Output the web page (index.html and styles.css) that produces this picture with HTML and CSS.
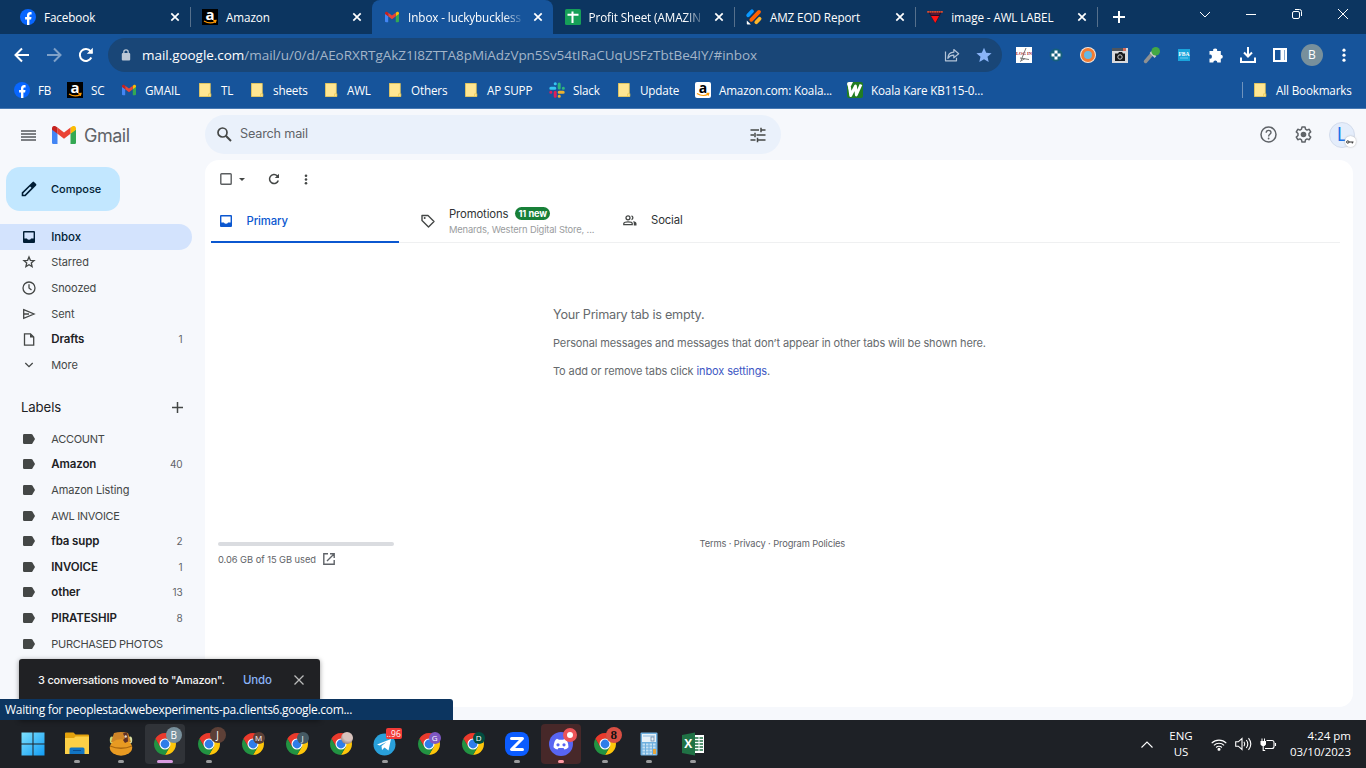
FILE: index.html
```html
<!DOCTYPE html>
<html lang="en">
<head>
    <meta charset="UTF-8">
    <meta name="viewport" content="width=device-width, initial-scale=1.0">
    <title>Inbox - Gmail</title>
    <link rel="stylesheet" href="styles.css">
</head>
<body>
    <!-- shared icons -->
    <svg class="defs" width="0" height="0">
        <symbol id="close" viewBox="0 0 10 10"><path d="M1.3 1.3l7.4 7.4M8.7 1.3L1.3 8.7" stroke="currentColor" stroke-width="1.7"/></symbol>
        <symbol id="facebook" viewBox="0 0 16 16"><circle cx="8" cy="8" r="8" fill="#0866ff"/><path d="M7 16V10.400H5.100V7.900H7V6.600C7 4.200 8.200 3 10.300 3c.5 0 1 .1 1.300.2v2.200h-.9c-1 0-1.300.5-1.300 1.300v1.200h2.100l-.4 2.500H9.400V16z" fill="#fff"/></symbol>
        <symbol id="gmail" viewBox="0 0 24 18"><path d="M0 3v13.400C0 17.300.7 18 1.600 18h3.900V7.200z" fill="#4285f4"/><path d="M18.500 18h3.900c.9 0 1.600-.7 1.600-1.600V3l-5.500 4.200z" fill="#34a853"/><path d="M18.500 1.500v6.300L24 3.700V2.400c0-2-2.300-3.200-3.900-2z" fill="#fbbc04"/><path d="M5.500 7.800V1.500l6.500 5 6.500-5v6.300L12 12.700z" fill="#ea4335"/><path d="M0 2.400v1.300l5.500 4.100V1.500L3.900.4C2.300-.8 0 .4 0 2.400z" fill="#c5221f"/></symbol>
        <symbol id="folder" viewBox="0 0 16 16"><path d="M2.300 1.300h11v10.500h.6v2.900H2.300z" fill="#ffe692"/><path d="M2.500 1.500h10.800v10.300M13.600 11.800h-2v2.800M2.500 1.300v13.200h11.400v-3" stroke="#eac54f" stroke-width=".7" fill="none"/></symbol>
        <symbol id="inbox" viewBox="0 0 12 12"><path fill-rule="evenodd" d="M1.300 0h9.400C11.500 0 12 .5 12 1.300v9.400c0 .8-.5 1.300-1.300 1.300H1.300C.5 12 0 11.500 0 10.700V1.300C0 .5.500 0 1.300 0zM1.400 1.400v6h2.500a2.300 2.300 0 0 0 4.200 0h2.500v-6z" fill="currentColor"/></symbol>
        <symbol id="label" viewBox="0 0 12 10"><path d="M1.200 0h7q.8 0 1.200.6L12 5 9.400 9.400q-.4.6-1.200.6h-7Q0 10 0 8.800V1.200Q0 0 1.200 0z" fill="#444746"/></symbol>
        <symbol id="chrome" viewBox="0 0 48 48"><path d="M24 13h19.050A22 22 0 0 1 24 46l9.530-16.500z" fill="#fdc60a"/><path d="M33.530 29.500L24 46A22 22 0 0 1 4.950 13l9.520 16.500z" fill="#229342"/><path d="M14.470 29.500L4.950 13a22 22 0 0 1 38.100 0H24z" fill="#ea3a2c"/><circle cx="24" cy="24" r="11" fill="#fff"/><circle cx="24" cy="24" r="8.800" fill="#2f7de9"/></symbol>
    </svg>

    <div class="tabs">
        <div class="tab">
            <svg class="fav"><use href="#facebook"/></svg><span>Facebook</span>
            <svg class="x"><use href="#close"/></svg>
        </div>
        <div class="tab line">
            <svg class="fav" viewBox="0 0 16 16"><rect width="16" height="16"/><text x="8" y="10.800" font-family="Open Sans" font-size="15" font-weight="700" text-anchor="middle" fill="#fff">a</text><path d="M2 12q6 3.600 11.500.5M11.300 11.700l2.700-.2-.7 2.300" stroke="#f90" stroke-width="1.200" fill="none"/></svg><span>Amazon</span>
            <svg class="x"><use href="#close"/></svg>
        </div>
        <div class="tab active">
            <svg class="fav gm"><use href="#gmail"/></svg><span class="fade">Inbox - luckybuckless</span>
            <svg class="x"><use href="#close"/></svg>
        </div>
        <div class="tab">
            <svg class="fav" viewBox="0 0 16 16"><rect width="16" height="16" rx="1.500" fill="#169f58"/><path d="M2.500 5.700h11M7.500 2.500v11.500" stroke="#fff" stroke-width="2"/></svg><span class="fade">Profit Sheet (AMAZIN</span>
            <svg class="x"><use href="#close"/></svg>
        </div>
        <div class="tab line">
            <svg class="fav" viewBox="0 0 16 16" stroke-linecap="round" stroke-width="3.800"><path d="M2.200 6.300L6 2.300" stroke="#0a99ff"/><path d="M5.300 10.800l7.700-7.900" stroke="#ff6100"/><path d="M10.300 13.200l3.300-3.400" stroke="#ffb629"/><path d="M.8 11.400v3.300q0 .8.800.8h3.300z" fill="#fff" stroke="none"/></svg><span>AMZ EOD Report</span>
            <svg class="x"><use href="#close"/></svg>
        </div>
        <div class="tab line">
            <svg class="fav" viewBox="0 0 16 16"><path d="M1 2.500h14L8.500 14.500z" fill="#2b0b21"/><path d="M.2 2.800h15.600" stroke="#d94a30" stroke-width="1.800" stroke-dasharray="2 .3"/><path d="M3.500 5h9" stroke="#7a2a55"/><path d="M4 7h8L8.300 14z" fill="#ff1515"/></svg><span>image - AWL LABEL</span>
            <svg class="x"><use href="#close"/></svg>
        </div>
        <div class="new-tab line"><svg width="12" height="12"><path d="M6 0v12M0 6h12" stroke="#fff" stroke-width="2"/></svg></div>
        <div class="win">
            <svg viewBox="0 0 12 12"><path d="M1 4l5 5 5-5"/></svg>
            <svg viewBox="0 0 12 12"><path d="M1 6.500h10"/></svg>
            <svg viewBox="0 0 12 12"><rect x="1.500" y="3.500" width="7" height="7" rx="1.500"/><path d="M4 1.500h4.500a2 2 0 0 1 2 2V8"/></svg>
            <svg viewBox="0 0 12 12"><path d="M1 1l10 10M11 1L1 11"/></svg>
        </div>
    </div>

    <div class="toolbar">
        <div class="nav">
            <svg viewBox="0 0 16 16"><path d="M15 8H2M8 1.500L1.500 8 8 14.500"/></svg>
            <svg viewBox="0 0 16 16" class="dim"><path d="M1 8h13M8 1.500L14.500 8 8 14.500"/></svg>
            <svg viewBox="0 0 16 16"><path d="M13.300 10.500A6 6 0 1 1 12.600 4.200L14 5.800"/><path d="M14.800.8v6H8.800z" fill="#fff" stroke="none"/></svg>
        </div>
        <div class="address">
            <svg class="lock" width="10" height="12" viewBox="0 0 10 12"><rect x=".8" y="4" width="8.400" height="7.500" rx="1" fill="#bdc8d6"/><path d="M2.800 4.500V3a2.200 2.200 0 0 1 4.400 0v1.500" stroke="#bdc8d6" stroke-width="1.300" fill="none"/></svg>
            <p class="url"><b>mail.google.com</b>/mail/u/0/d/AEoRXRTgAkZ1I8ZTTA8pMiAdzVpn5Sv54tIRaCUqUSFzTbtBe4IY/#inbox</p>
            <svg class="share" width="16" height="16" viewBox="0 0 16 16"><path d="M1.500 4.500v9.300h11v-3M3.800 11.300c.2-4 2.500-6 6-6.100V2.500l4.900 4.200-4.900 4.100V8.200c-2.600 0-4.500.8-6 3.100z" fill="none" stroke="#b3c4d8" stroke-width="1.200" stroke-linejoin="round"/></svg>
            <svg width="16" height="16" viewBox="0 0 16 16"><path d="M8 .7l2.200 5 5.400.5-4.100 3.500 1.200 5.300L8 12.200 3.300 15l1.200-5.300L.4 6.200l5.400-.5z" fill="#8ab4f8"/></svg>
        </div>
        <div class="exts">
            <svg viewBox="0 0 16 16"><rect width="16" height="16" fill="#fff"/><path d="M10 1L5 13.500M4 11l9 1.500M4 14.500l5-3" stroke="#777" fill="none"/><text x="8" y="7.800" font-family="Liberation Serif" font-size="4.500" font-weight="700" text-anchor="middle" fill="#a02030">LOG IN</text></svg>
            <svg viewBox="0 0 16 16"><circle cx="8" cy="8" r="6.500" fill="#17607c"/><path d="M8 3.500v9M3.500 8h9" stroke="#fff" stroke-width="3"/><path d="M6.500 6.500h3v3h-3z" fill="#175d7c"/></svg>
            <svg viewBox="0 0 16 16"><circle cx="8" cy="8" r="8" fill="#f4e7dc"/><circle cx="8" cy="8" r="5.500" fill="#65b8e4" stroke="#f17c34" stroke-width="3"/></svg>
            <svg viewBox="0 0 16 16"><rect width="16" height="15" y="1" fill="#d9dadd"/><path d="M0 1h12v3H0z" fill="#4e555e"/><path d="M11 1h3v3h-3z" fill="#d46b5a"/><path d="M3 6.500h3l1-1.500h3l1 1.500h2V14H3z" fill="#17191c"/><circle cx="8" cy="10" r="2.200" fill="#17191c" stroke="#ccc"/></svg>
            <svg viewBox="0 0 16 16"><path d="M1.500 14.500L8 7" stroke="#8f9192" stroke-width="3.500" stroke-linecap="round"/><path d="M6.500 5l5 5" stroke="#c8cac8" stroke-width="2.500"/><circle cx="11.700" cy="4.300" r="4.300" fill="#43a844"/></svg>
            <svg viewBox="0 0 16 16"><rect x="2" y="2" width="12" height="12" fill="#1aa5dc"/><text x="8" y="8.500" font-family="Liberation Serif" font-size="5.500" font-weight="700" text-anchor="middle" fill="#fff">FBA</text><path d="M4 11h8" stroke="#70c9ec"/></svg>
            <svg viewBox="0 0 16 16"><path d="M1.500 4h3.700a2 2 0 1 1 3.900 0h3.700v3.800a2 2 0 1 1 0 4v3.700H9.300a2 2 0 1 0-4 0H1.500v-3.900a2 2 0 1 0 0-3.900z" fill="#fff"/></svg>
            <svg viewBox="0 0 16 16"><path d="M8 0v9M4 5.500l4 4 4-4M1 10.500V15h14v-4.500" stroke="#fff" stroke-width="2" fill="none"/></svg>
            <svg viewBox="0 0 16 16"><path d="M2 2h12v12H2zM9.500 2v12M11.500 2v12" stroke="#fff" stroke-width="2" fill="none"/></svg>
            <span class="me">B</span>
            <svg viewBox="0 0 16 16" fill="#fff"><circle cx="8" cy="3.200" r="1.600"/><circle cx="8" cy="8.200" r="1.600"/><circle cx="8" cy="13.200" r="1.600"/></svg>
        </div>
    </div>

    <div class="bookmarks">
        <div><svg><use href="#facebook"/></svg>FB</div>
        <div><svg viewBox="0 0 16 16"><rect width="16" height="16"/><text x="8" y="10.800" font-family="Open Sans" font-size="15" font-weight="700" text-anchor="middle" fill="#fff">a</text><path d="M2 12q6 3.600 11.500.5M11.300 11.700l2.700-.2-.7 2.300" stroke="#f90" stroke-width="1.200" fill="none"/></svg>SC</div>
        <div><svg class="gm"><use href="#gmail"/></svg>GMAIL</div>
        <div><svg><use href="#folder"/></svg>TL</div>
        <div><svg><use href="#folder"/></svg>sheets</div>
        <div><svg><use href="#folder"/></svg>AWL</div>
        <div><svg><use href="#folder"/></svg>Others</div>
        <div><svg><use href="#folder"/></svg>AP SUPP</div>
        <div><svg viewBox="0 0 16 16" stroke-width="3" stroke-linecap="round"><path d="M1.800 6.200h4M6.200 1.700h.1" stroke="#36c5f0"/><path d="M10.200 2v4M14.300 6.200h.1" stroke="#2eb67d"/><path d="M10.200 10.300h4M10.200 14.300h.1" stroke="#ecb22e"/><path d="M6.200 10.300v4M1.800 10.300h.1" stroke="#e01e5a"/></svg>Slack</div>
        <div><svg><use href="#folder"/></svg>Update</div>
        <div><svg viewBox="0 0 16 16"><rect width="16" height="16" rx="2" fill="#fff"/><text x="8" y="10.500" font-family="Open Sans" font-size="14" font-weight="700" text-anchor="middle">a</text><path d="M2 11.500q6 3.700 11.500.5M11.500 11.300h2.300l-.6 2.300" stroke="#f90" stroke-width="1.200" fill="none"/></svg>Amazon.com: Koala...</div>
        <div><svg viewBox="0 0 16 16"><rect width="16" height="16" rx="2" fill="#217c22"/><path d="M0 2q0-2 2-2h4L2 8z" fill="#fff"/><path d="M2.500 5l1.200 8.500L8.500 4l.8 9L14 2.500" stroke="#fff" stroke-width="2.800" stroke-linejoin="round" fill="none"/></svg>Koala Kare KB115-0...</div>
        <div class="all"><svg><use href="#folder"/></svg>All Bookmarks</div>
    </div>

    <div class="gmail">
        <div class="sidebar">
            <div class="brand">
                <svg width="15" height="11"><path d="M0 1h15M0 4h15M0 7h15M0 10h15" stroke="#55585c" stroke-width="1.300"/></svg>
                <svg class="logo" width="24" height="18"><use href="#gmail"/></svg>
                <span>Gmail</span>
            </div>
            <button class="compose">
                <svg width="16" height="16" viewBox="0 0 16 16"><path fill-rule="evenodd" d="M.7 15.300V11.500L11.600.9q.7-.6 1.400 0l2.100 2.100q.6.700 0 1.400L4.500 15.300zM2.300 13.700h1.400l6.800-6.900-1.400-1.400-6.800 6.900z" fill="#001d35"/></svg>
                Compose
            </button>
            <ul class="folders">
                <li class="current"><svg viewBox="0 0 12 12"><use href="#inbox"/></svg>Inbox</li>
                <li><svg viewBox="0 0 12 12"><path d="M6 .9l1.400 3.400 3.700.3-2.800 2.400.8 3.600L6 8.700l-3.100 1.900.8-3.600L.9 4.600l3.700-.3z"/></svg>Starred</li>
                <li><svg class="clock" viewBox="0 0 14 14"><circle cx="7" cy="7" r="6"/><path d="M7 3.300V7l2.500 2"/></svg>Snoozed</li>
                <li><svg viewBox="0 0 12 12"><path d="M.7 1.700L11 6 .7 10.300zM1 6h5"/></svg>Sent</li>
                <li class="unread"><svg class="doc" viewBox="0 0 11 13"><path d="M1 .8h6l3.200 3.200v8.200H1z"/><path d="M6.500.5v4h4z" fill="#444746" stroke="none"/></svg>Drafts<i>1</i></li>
                <li><svg viewBox="0 0 12 12"><path d="M2.300 4L6 7.700 9.700 4"/></svg>More</li>
            </ul>
            <div class="labels-title">Labels <svg width="11" height="11"><path d="M5.500 0v11M0 5.500h11" stroke="#444746" stroke-width="1.500"/></svg></div>
            <ul class="labels">
                <li class="caps"><svg><use href="#label"/></svg>ACCOUNT</li>
                <li class="unread"><svg><use href="#label"/></svg>Amazon<i>40</i></li>
                <li><svg><use href="#label"/></svg>Amazon Listing</li>
                <li class="caps"><svg><use href="#label"/></svg>AWL INVOICE</li>
                <li class="unread"><svg><use href="#label"/></svg>fba supp<i>2</i></li>
                <li class="unread"><svg><use href="#label"/></svg>INVOICE<i>1</i></li>
                <li class="unread"><svg><use href="#label"/></svg>other<i>13</i></li>
                <li class="unread"><svg><use href="#label"/></svg>PIRATESHIP<i>8</i></li>
                <li class="caps"><svg><use href="#label"/></svg>PURCHASED PHOTOS</li>
            </ul>
        </div>

        <div class="content">
            <div class="header">
                <div class="search">
                    <svg width="15" height="15" viewBox="0 0 15 15"><circle cx="5.500" cy="5.500" r="4.500" fill="none" stroke="#444746" stroke-width="1.700"/><path d="M8.800 8.800l5.200 5.200" stroke="#444746" stroke-width="2"/></svg>
                    <span>Search mail</span>
                    <svg width="16" height="16" viewBox="0 0 16 16"><path d="M.5 3h8.500M11 3h4.500M11 .7v4.600M.5 8h3.500M5 5.700v4.600M6.500 8h9M.5 13h5M7.500 13h8M7.500 10.700v4.600" stroke="#444746" stroke-width="1.500"/></svg>
                </div>
                <div class="account">
                    <svg width="17" height="17" viewBox="0 0 17 17"><circle cx="8.500" cy="8.500" r="7.500" fill="none" stroke="#5f6368" stroke-width="1.500"/><path d="M6.200 6.800c0-3.200 4.800-3.100 4.800-.3 0 1.800-2.400 1.900-2.400 4" fill="none" stroke="#5f6368" stroke-width="1.400"/><circle cx="8.600" cy="12.500" r=".9" fill="#5f6368"/></svg>
                    <svg width="17" height="17" viewBox="0 0 17 17"><path d="M7 .9h3l.5 2.300 1.500.9 2.200-.8 1.500 2.600-1.700 1.600v2l1.700 1.600-1.500 2.600-2.200-.8-1.500.9L10 16.100H7l-.5-2.300-1.500-.9-2.200.8-1.500-2.600L3 9.500v-2L1.300 5.900l1.500-2.600 2.200.8 1.500-.9z" fill="none" stroke="#5f6368" stroke-width="1.500" stroke-linejoin="round"/><circle cx="8.500" cy="8.500" r="2.800" fill="#5f6368"/></svg>
                    <div class="avatar">L<em><svg width="8" height="4" viewBox="0 0 8 4"><circle cx="1.800" cy="2" r="1.200" fill="none" stroke="#333"/><path d="M3 2h4.500M6.300 2v1.500" stroke="#333"/></svg></em></div>
                </div>
            </div>
            <div class="panel">
                <div class="actions">
                    <svg width="12" height="12"><rect x=".8" y=".8" width="10.400" height="10.400" rx=".8" fill="none" stroke="#5b5e60" stroke-width="1.400"/></svg>
                    <svg class="arrow" width="6" height="3"><path d="M0 0h6L3 3z" fill="#444746"/></svg>
                    <svg class="refresh" width="12" height="12" viewBox="0 0 12 12"><path d="M10.300 7.500A4.500 4.500 0 1 1 9.200 2.800L10.500 4" fill="none" stroke="#444746" stroke-width="1.500"/><path d="M11 .8v4.200H6.800z" fill="#444746"/></svg>
                    <svg width="4" height="11" fill="#444746"><circle cx="2" cy="1.700" r="1.300"/><circle cx="2" cy="5.500" r="1.300"/><circle cx="2" cy="9.300" r="1.300"/></svg>
                </div>
                <div class="categories">
                    <div class="cat primary"><svg width="12" height="12"><use href="#inbox"/></svg><span>Primary</span></div>
                    <div class="cat promo">
                        <svg width="14" height="14" viewBox="0 0 14 14"><path d="M1 1.500h6l6 6-5.500 5.500-6.500-6.500z" fill="none" stroke="#444746" stroke-width="1.400" stroke-linejoin="round"/><circle cx="3.700" cy="4" r="1" fill="#444746"/></svg>
                        <div>
                            <p><span>Promotions</span><b>11 new</b></p>
                            <small>Menards, Western Digital Store, ...</small>
                        </div>
                    </div>
                    <div class="cat social"><svg width="14" height="11" viewBox="0 0 14 11"><g fill="none" stroke="#444746" stroke-width="1.300"><circle cx="5" cy="2.800" r="2"/><path d="M.8 9.700V8.600c0-2.300 8.400-2.300 8.400 0v1.100zM8.500.9a2 2 0 0 1 0 3.800"/></g><path d="M10 6.300c2.400.3 3.500 1.200 3.500 2.300v1.800h-2.700V8.500c0-.9-.3-1.600-.8-2.200z" fill="#444746"/></svg><span>Social</span></div>
                </div>
                <div class="empty">
                    <h3>Your Primary tab is empty.</h3>
                    <p>Personal messages and messages that don’t appear in other tabs will be shown here.</p>
                    <p>To add or remove tabs click <a>inbox settings</a>.</p>
                </div>
                <div class="footer">
                    <div class="storage">
                        <div class="bar"></div>
                        <p><span>0.06 GB of 15 GB used</span> <svg width="12" height="12" viewBox="0 0 12 12"><path d="M5 .8H.8v10.400h10.400V7M7 .8h4.200V5M11 1L4 8" fill="none" stroke="#5f6368" stroke-width="1.400"/></svg></p>
                    </div>
                    <p class="terms">Terms · Privacy · Program Policies</p>
                </div>
            </div>
        </div>

        <div class="toast">
            <span>3 conversations moved to "Amazon".</span>
            <a>Undo</a>
            <svg width="10" height="10"><path d="M.5.5l9 9M9.500.5l-9 9" stroke="#bbb" stroke-width="1.300"/></svg>
        </div>
        <div class="status">Waiting for peoplestackwebexperiments-pa.clients6.google.com...</div>
    </div>

    <div class="taskbar">
        <div class="apps">
            <div class="app"><svg viewBox="0 0 24 24"><defs><linearGradient id="win" x2="1" y2="1"><stop stop-color="#7de1fd"/><stop offset="1" stop-color="#119cf4"/></linearGradient></defs><path d="M.5.500h11v11H.5zM12.500.500h11v11h-11zM.5 12.500h11v11H.5zM12.500 12.500h11v11h-11z" fill="url(#win)"/></svg></div>
            <div class="app run"><svg viewBox="0 0 24 24"><path d="M0 1.500Q0 .5 1 .500h7.500l2 2H23q1 0 1 1V21q0 1-1 1H1q-1 0-1-1z" fill="#e3a20c"/><path d="M0 6h9l1.500-1.500H24V22H0z" fill="#fdd047"/><path d="M4.500 22v-5q0-1.500 1.500-1.500h12q1.500 0 1.500 1.500v5z" fill="#1275c4"/><path d="M8 18.500h8" stroke="#0a4d91"/></svg></div>
            <div class="app run"><svg viewBox="0 0 24 24"><ellipse cx="2.800" cy="8" rx="2" ry="3.500" fill="#c8d878"/><ellipse cx="21.200" cy="8" rx="2" ry="3.500" fill="#d8dda0"/><path d="M5 1q7-2 14 0l3 9H2z" fill="#cf8528"/><ellipse cx="12" cy="15.500" rx="11.200" ry="8.200" fill="#e89a22"/><path d="M1 14q11 4.500 22 0" stroke="#a86610" stroke-width="1.300" fill="none"/><path d="M14 1.500q3-2 4.500 0l.5 8-3 1.500-2-3 2-2z" fill="#5e3026"/><circle cx="16.700" cy="4.500" r="1.200" fill="#e8d8cc"/></svg></div>
            <div class="app run on"><svg><use href="#chrome"/></svg><span class="badge big slate">B</span></div>
            <div class="app run"><svg><use href="#chrome"/></svg><span class="badge big brown">J</span></div>
            <div class="app"><svg><use href="#chrome"/></svg><span class="badge brown">M</span></div>
            <div class="app"><svg><use href="#chrome"/></svg><span class="badge teal">J</span></div>
            <div class="app"><svg><use href="#chrome"/></svg><span class="badge photo"></span></div>
            <div class="app run"><svg viewBox="0 0 24 24"><circle cx="11.500" cy="12.500" r="11" fill="#29a0da"/><path d="M4 12.500l14-5.500-2.500 11.500-4-3-2.500 2.500-.5-4 5-4-7 3.500z" fill="#fff"/></svg><span class="count">..96</span></div>
            <div class="app"><svg><use href="#chrome"/></svg><span class="badge purple">G</span></div>
            <div class="app"><svg><use href="#chrome"/></svg><span class="badge green">D</span></div>
            <div class="app run"><svg viewBox="0 0 24 24"><rect width="24" height="24" rx="8" fill="#0b5cff"/><path d="M6.500 6.500h11l-11 11h11" stroke="#fff" stroke-width="3" stroke-linejoin="round" stroke-linecap="round" fill="none"/></svg></div>
            <div class="app run alert"><svg viewBox="0 0 24 24"><circle cx="12" cy="12" r="12" fill="#5865f2"/><path d="M8 6.800l2 1h4l2-1q3 1 3.500 8.500-1.500 2-4 2.200l-1-1.500h-5l-1 1.500q-2.500-.2-4-2.200Q5 7.800 8 6.800z" fill="#fff"/><circle cx="9" cy="12.800" r="1.600" fill="#5865f2"/><circle cx="15" cy="12.800" r="1.600" fill="#5865f2"/></svg><span class="badge dot"></span></div>
            <div class="app run"><svg><use href="#chrome"/></svg><span class="badge big red">8</span></div>
            <div class="app run"><svg viewBox="0 0 24 24"><rect x="3.500" y=".500" width="17" height="23" rx="1" fill="#6eb0df"/><rect x="5" y="2" width="14" height="8" fill="#e8f2f8"/><path d="M6 4h12" stroke="#89b9df"/><rect x="14" y="5" width="3" height="4" fill="none" stroke="#5b7da0" stroke-width=".7"/><path d="M5.500 12.500h13M5.500 15.500h13M5.500 18.500h13M5.500 21.500h13" stroke="#c5e0f2" stroke-width="2" stroke-dasharray="2.500 1"/><path d="M16 17h3v5h-3z" fill="#e8a53a"/></svg></div>
            <div class="app run"><svg viewBox="0 0 24 24"><rect x="11" y="3" width="12" height="18" fill="#fff"/><path d="M14 6h8M14 9h8M14 12h8M14 15h8M14 18h8" stroke="#207245" stroke-width="1.500"/><path d="M18 4v16" stroke="#fff"/><path d="M1 3l13-2.500v23L1 21z" fill="#207245"/><text x="7.300" y="16" font-family="Open Sans" font-size="12" font-weight="700" text-anchor="middle" fill="#fff">X</text></svg></div>
        </div>
        <div class="tray">
            <svg width="12" height="7" viewBox="0 0 12 7"><path d="M.5 6.500L6 1l5.500 5.500"/></svg>
            <p class="lang">ENG<br>US</p>
            <svg width="16" height="13" viewBox="0 0 16 13"><path d="M.7 5.200a10.300 10.300 0 0 1 14.600 0M2.900 7.400a7.200 7.200 0 0 1 10.200 0M5.100 9.500a4.100 4.100 0 0 1 5.800 0"/><circle cx="8" cy="11.200" r="1" fill="#fff"/></svg>
            <svg width="17" height="14" viewBox="0 0 17 14"><path d="M.7 4.800v4.400h2.600L7 12.500v-11L3.300 4.800zM9 4.700q1.500 2.300 0 4.600M11.300 3q3 4 0 8M13.500 1.200q4.600 5.800 0 11.600"/></svg>
            <svg width="17" height="13" viewBox="0 0 17 13"><path d="M6.500 2.500H12q2 0 2 2v4q0 2-2 2H5M15.500 5v3M3.200 6v6.500h2"/><path d="M.5 3h5.500v3.500L4.500 8H2L.5 6.500zM1.500.5h1V3h-1zM4 .5h1V3H4z" fill="#fff" stroke="none"/></svg>
            <p class="clock-text">4:24 pm<br>03/10/2023</p>
        </div>
    </div>
</body>
</html>
```
FILE: styles.css
```css
*{
    margin: 0;
    padding: 0;
    box-sizing: border-box;
}
body{
    width: 1366px;
    height: 768px;
    overflow: hidden;
    display: flex;
    flex-direction: column;
    font-family: "Open Sans", "Noto Sans", sans-serif;
    font-size: 12px;
    color: #fff;
}
svg{
    flex: none;
    display: block;
    overflow: visible;
}
.defs{
    position: absolute;
}

/* browser tabs */
.tabs{
    height: 34px;
    display: flex;
    padding-left: 9px;
    background-color: #0c3560;
}
.tab{
    width: 181.3px;
    height: 34px;
    display: flex;
    align-items: center;
    padding: 0 10px 0 11px;
    font-size: 11.7px;
    letter-spacing: -0.1px;
    white-space: nowrap;
}
.tab + .tab{
    padding-left: 11.7px;
}
.tab span{
    flex: 1;
    margin: 0 8px;
}
.fav{
    width: 16px;
    height: 16px;
}
.gm{
    padding: 2px 1px;
}
.x{
    width: 10px;
    height: 10px;
}
.line{
    background: linear-gradient(#56708c, #56708c) no-repeat 0 7px / 1px 20px;
}
.tabs .active{
    background-color: #16549b;
    border-radius: 8px 8px 0 0;
    padding-left: 12.5px;
}
.fade{
    -webkit-mask-image: linear-gradient(90deg, #000 82%, transparent);
    mask-image: linear-gradient(90deg, #000 82%, transparent);
}
.new-tab{
    width: 45px;
    padding: 11px 0 0 16px;
}
.win{
    margin-left: auto;
    display: flex;
}
.win svg{
    width: 46px;
    height: 28px;
    padding: 8px 17px;
    fill: none;
    stroke: #fff;
}

/* toolbar */
.toolbar{
    height: 40px;
    display: flex;
    align-items: center;
    background-color: #16549b;
    padding: 2px 6px 0;
}
.nav{
    display: flex;
    width: 102px;
}
.nav svg{
    width: 32px;
    height: 16px;
    fill: none;
    stroke: #fff;
    stroke-width: 2;
}
.nav .dim{
    opacity: .45;
}
.address{
    width: 894px;
    height: 34px;
    display: flex;
    align-items: center;
    padding: 0 10px 0 13px;
    border-radius: 17px;
    background-color: #194677;
}
.url{
    flex: 1;
    margin-left: 11px;
    font-size: 13.5px;
    letter-spacing: -0.04px;
    color: #a3b5c9;
    white-space: nowrap;
}
.url b{
    font-weight: 400;
    color: #fff;
}
.share{
    margin-right: 16px;
}
.exts{
    display: flex;
    align-items: center;
    margin-left: 6px;
}
.exts svg{
    width: 16px;
    height: 16px;
    margin: 0 8px;
}
.me{
    width: 22px;
    height: 22px;
    margin: 0 5px;
    border-radius: 50%;
    background-color: #78909c;
    text-align: center;
    line-height: 22px;
}

/* bookmarks */
.bookmarks{
    height: 35px;
    display: grid;
    grid-template-columns: 53px 54px 76px 52px 74px 64px 76px 86px 67px 79px 152px 1fr 110px;
    align-items: center;
    padding: 0 14px 2px;
    background-color: #16549b;
    border-bottom: 1px solid #4779b3;
    font-size: 11.7px;
    letter-spacing: -0.17px;
    white-space: nowrap;
}
.bookmarks div{
    display: flex;
    align-items: center;
    gap: 8px;
    height: 16px;
}
.bookmarks svg{
    width: 16px;
    height: 16px;
}
.bookmarks .all{
    padding-left: 9px;
    border-left: 1px solid #6f93bd;
}

/* gmail page */
.gmail{
    position: relative;
    height: 611px;
    display: flex;
    background-color: #f6f8fc;
    color: #444746;
    font-family: Inter, Roboto, sans-serif;
    font-size: 11px;
    letter-spacing: -0.12px;
}
.sidebar{
    width: 205px;
}
.brand{
    height: 58px;
    display: flex;
    align-items: center;
    padding: 0 0 6px 21px;
}
.brand .logo{
    margin: 0 8px 0 16px;
}
.brand span{
    font-size: 18px;
    letter-spacing: -0.5px;
    color: #5f6368;
}
.compose{
    width: 114px;
    height: 44px;
    margin-left: 6px;
    display: flex;
    align-items: center;
    gap: 14px;
    padding: 0 0 1px 15px;
    border: none;
    border-radius: 14px;
    background-color: #c2e7ff;
    color: #001d35;
    font-family: inherit;
    font-size: 11px;
    font-weight: 500;
}
.folders{
    margin-top: 13px;
}
.sidebar li{
    width: 192px;
    height: 25.6px;
    display: flex;
    align-items: center;
    padding: 0 9.5px 0 23px;
    list-style: none;
    border-radius: 0 13px 13px 0;
}
.sidebar li svg{
    width: 12px;
    height: 12px;
    margin-right: 16.3px;
    fill: none;
    stroke: #444746;
    stroke-width: 1.3;
}
.sidebar li .clock{
    width: 14px;
    height: 14px;
    margin: 0 15.3px 0 -1px;
}
.sidebar li .doc{
    height: 13px;
}
.sidebar li.current svg, .sidebar .labels svg{
    stroke: none;
}
.sidebar .labels svg{
    height: 10px;
}
.sidebar li.current{
    background-color: #d3e3fd;
    color: #001d35;
    font-size: 11.5px;
    font-weight: 500;
}
.sidebar li.caps{
    letter-spacing: -0.3px;
}
.sidebar li.unread{
    font-size: 11.5px;
    font-weight: 600;
    color: #202124;
}
.sidebar i{
    margin-left: auto;
    font-style: normal;
    font-weight: 400;
    font-size: 10px;
    color: #5f6368;
}
.labels-title{
    height: 48px;
    width: 183px;
    display: flex;
    align-items: center;
    justify-content: space-between;
    padding-left: 21px;
    margin: 5px 0 -4.5px;
    font-size: 13.2px;
    color: #202124;
}
.labels-title svg{
    margin-top: 1px;
}
.content{
    width: 1148px;
}
.header{
    height: 51px;
    display: flex;
    padding-top: 6px;
}
.search{
    width: 576px;
    height: 39px;
    display: flex;
    align-items: center;
    padding: 0 15px 0 12px;
    border-radius: 20px;
    background-color: #eaf1fb;
    font-size: 12.7px;
    letter-spacing: -0.2px;
    color: #5f6368;
}
.search span{
    flex: 1;
    margin: -2px 0 0 8px;
}
.account{
    margin-left: auto;
    display: flex;
    align-items: center;
    height: 39px;
    gap: 18px;
    margin-right: -2px;
}
.avatar{
    position: relative;
    width: 26px;
    height: 26px;
    margin-left: -1px;
    border: 1px solid #d3dcec;
    border-radius: 50%;
    background-color: #e4edfb;
    color: #1a73e8;
    font-size: 18px;
    line-height: 24px;
    text-align: center;
}
.avatar em{
    position: absolute;
    right: -2px;
    bottom: 0;
    width: 11px;
    height: 11px;
    padding: 4px 1px;
    border-radius: 50%;
    background-color: #fff;
    box-shadow: 0 0 2px #aaa;
}
.panel{
    height: 547px;
    border-radius: 14px;
    background-color: #fff;
}
.actions{
    height: 38px;
    display: flex;
    align-items: center;
    padding-left: 15px;
}
.arrow{
    margin: 0 23px 0 7px;
}
.refresh{
    margin-right: 24px;
}
.categories{
    height: 45px;
    display: flex;
    margin: 0 13px 0 6px;
    border-bottom: 1px solid #eff0f1;
}
.cat{
    display: flex;
    align-items: center;
    width: 202px;
    font-size: 11.3px;
    color: #303335;
}
.primary{
    width: 188px;
    height: 45px;
    padding: 2px 9px 0;
    gap: 14.5px;
    border-bottom: 2px solid #0b57d0;
    color: #0b57d0;
    font-weight: 500;
}
.promo{
    margin-left: 22px;
    gap: 14px;
}
.promo svg{
    margin-top: 1px;
}
.promo p{
    display: flex;
    align-items: center;
    height: 14px;
    margin-top: 4px;
}
.promo b{
    margin-left: 7px;
    padding: 0 3px;
    border-radius: 7px;
    background-color: #188038;
    color: #fff;
    font-size: 9.2px;
    letter-spacing: -0.15px;
    word-spacing: 0.5px;
    line-height: 13px;
}
.promo small{
    display: block;
    font-size: 9.4px;
    letter-spacing: -0.16px;
    line-height: 17px;
    color: #9a9c9e;
    white-space: nowrap;
}
.social{
    gap: 14px;
}
.empty{
    height: 299px;
    padding: 63px 0 0 348px;
    color: #666a6d;
}
.empty h3{
    font-size: 12.7px;
    font-weight: 400;
    letter-spacing: -0.26px;
    line-height: 18px;
}
.empty p{
    line-height: 18px;
    margin-top: 10px;
}
.empty a{
    color: #3d57c4;
}
.footer{
    display: flex;
    font-size: 9.3px;
    color: #5f6368;
}
.storage{
    width: 176px;
    margin-left: 13px;
}
.bar{
    height: 4px;
    border-radius: 2px;
    background-color: #dadce0;
}
.storage p{
    display: flex;
    align-items: center;
    gap: 7px;
    height: 14px;
    margin-top: 6px;
    letter-spacing: -0.04px;
}
.storage p span{
    padding-top: 1px;
}
.terms{
    margin: -4px 0 0 305.500px;
}

/* popups over the page */
.toast{
    position: absolute;
    left: 19px;
    bottom: 0;
    width: 301px;
    height: 61px;
    display: flex;
    padding: 14px 0 0 19px;
    border-radius: 3px 3px 0 0;
    background-color: #202124;
    box-shadow: 0 1px 5px rgba(0, 0, 0, .4);
    color: #f3f3f3;
    font-weight: 500;
    letter-spacing: -0.22px;
    white-space: nowrap;
}
.toast span{
    width: 205px;
}
.toast a{
    width: 51px;
    font-size: 11.5px;
    color: #8ab4f8;
}
.toast svg{
    margin-top: 2px;
}
.status{
    position: absolute;
    left: 0;
    bottom: 0;
    width: 453px;
    height: 21px;
    padding-left: 5px;
    border-radius: 0 3px 0 0;
    background-color: #0c3560;
    color: #fff;
    font: 12px/21px "Open Sans", sans-serif;
    letter-spacing: -0.3px;
    white-space: nowrap;
}

/* windows taskbar */
.taskbar{
    height: 48px;
    display: flex;
    align-items: center;
    justify-content: space-between;
    background-color: #1e2126;
}
.apps{
    display: flex;
    gap: 4px;
    padding-left: 12.7px;
}
.app{
    position: relative;
    width: 40px;
    height: 40px;
    padding: 8px;
    border-radius: 4px;
}
.app svg{
    width: 24px;
    height: 24px;
}
.run:after{
    content: "";
    position: absolute;
    left: 17px;
    bottom: 1px;
    width: 6px;
    height: 3px;
    border-radius: 2px;
    background-color: #9a9b9d;
}
.on{
    background-color: #303338;
}
.on:after{
    left: 12px;
    width: 16px;
    background-color: #d99be0;
}
.alert{
    background-color: #472829;
}
.alert:after{
    background-color: #ff99a4;
}
.badge{
    position: absolute;
    left: 20px;
    top: 8px;
    width: 12px;
    height: 12px;
    border-radius: 50%;
    font-size: 8px;
    line-height: 12px;
    text-align: center;
}
.big{
    left: 21px;
    top: 3px;
    width: 16px;
    height: 16px;
    font-size: 10px;
    line-height: 16px;
}
.slate{ background-color: #78909c; }
.brown{ background-color: #5d4037; }
.teal{ background-color: #455a64; }
.purple{ background-color: #7e57c2; }
.green{ background-color: #004d40; }
.red{
    background-color: #d94f43;
    color: #111;
    font-family: "Liberation Serif", serif;
    font-size: 13px;
    font-weight: 700;
}
.photo{
    background: radial-gradient(circle at 60% 30%, #d8c3bd 45%, #70564e);
}
.dot{
    left: 22px;
    top: 4px;
    width: 14px;
    height: 14px;
    border: 4px solid #ec5458;
    background-color: #fff;
}
.count{
    position: absolute;
    left: 21px;
    top: 4px;
    width: 16px;
    height: 11px;
    border-radius: 2px;
    background-color: #f23b37;
    font-size: 8.5px;
    line-height: 11px;
    text-align: center;
}
.tray{
    display: flex;
    align-items: center;
    padding-right: 15px;
    font-size: 11.5px;
    line-height: 16px;
}
.tray svg{
    fill: none;
    stroke: #fff;
    stroke-width: 1.1;
    margin-right: 8px;
}
.lang{
    width: 32px;
    margin: 0 14px 0 4px;
    text-align: center;
}
.clock-text{
    width: 66px;
    text-align: right;
    white-space: nowrap;
}
```
